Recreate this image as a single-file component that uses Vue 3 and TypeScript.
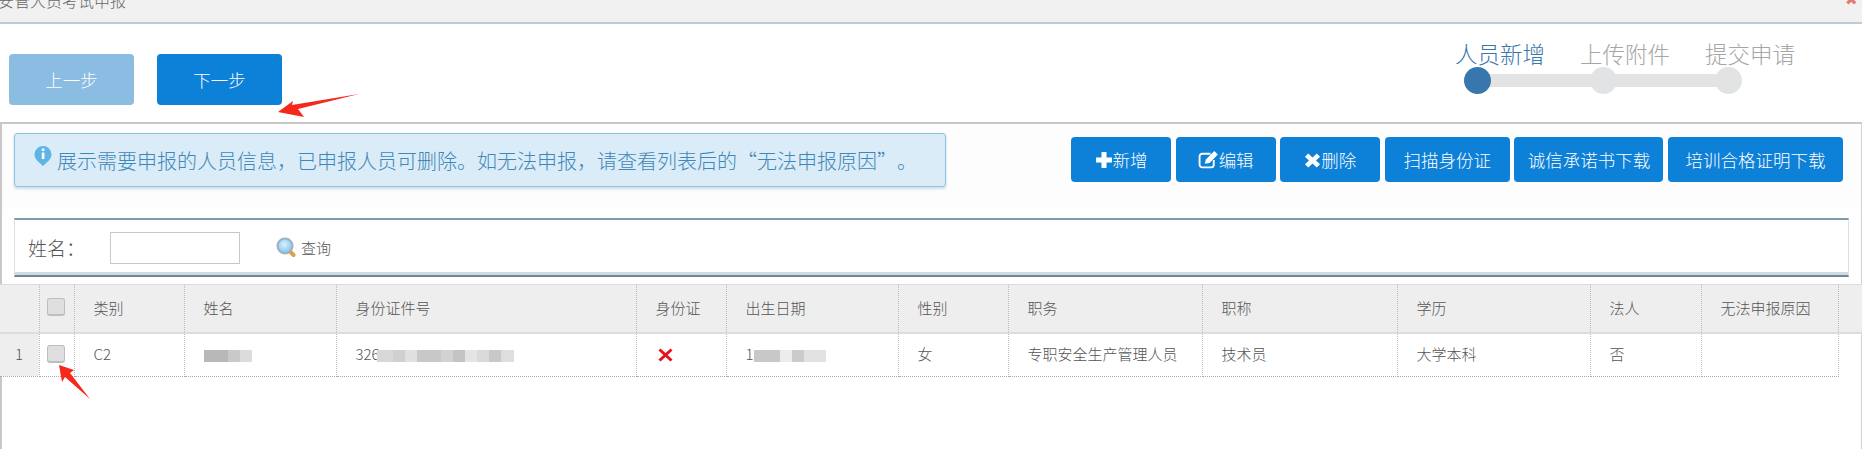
<script setup lang="ts">
const columns = [
  { w: 39, title: '', cell: '1' },
  { w: 35, title: '', cell: '' },
  { w: 110, title: '类别', cell: 'C2' },
  { w: 152, title: '姓名', cell: '' },
  { w: 300, title: '身份证件号', cell: '326' },
  { w: 90, title: '身份证', cell: '' },
  { w: 172, title: '出生日期', cell: '1' },
  { w: 110, title: '性别', cell: '女' },
  { w: 194, title: '职务', cell: '专职安全生产管理人员' },
  { w: 195, title: '职称', cell: '技术员' },
  { w: 193, title: '学历', cell: '大学本科' },
  { w: 111, title: '法人', cell: '否' },
  { w: 137, title: '无法申报原因', cell: '' },
  { w: 24, title: '', cell: '' }
]
const rest = columns.slice(2)
const nameBlur = [
  { w: 24, c: '#b8b8b8' }, { w: 12, c: '#c9c9c9' }, { w: 12, c: '#dcdcdc' }
]
const idBlur = [
  { w: 16, c: '#d8d8d8' }, { w: 12, c: '#d0d0d0' }, { w: 12, c: '#e0e0e0' }, { w: 24, c: '#c8c8c8' },
  { w: 12, c: '#d2d2d2' }, { w: 12, c: '#c4c4c4' }, { w: 12, c: '#e4e4e4' }, { w: 12, c: '#dadada' },
  { w: 12, c: '#c8c8c8' }, { w: 13, c: '#dedede' }
]
const dateBlur = [
  { w: 26, c: '#c8c8c8' }, { w: 12, c: '#ececec' }, { w: 12, c: '#cbcbcb' }, { w: 22, c: '#e2e2e2' }
]
</script>

<template>
  <div class="page">
    <header class="titlebar">
      <span class="title">安管人员考试申报</span>
      <span class="close">✖</span>
    </header>

    <section class="topline">
      <div class="nav-buttons">
        <button class="btn nav prev">上一步</button>
        <button class="btn nav">下一步</button>
      </div>
      <div class="stepper">
        <div class="labels">
          <span class="active">人员新增</span>
          <span>上传附件</span>
          <span>提交申请</span>
        </div>
        <div class="track">
          <i class="dot on"></i>
          <i class="dot"></i>
          <i class="dot"></i>
        </div>
      </div>
    </section>

    <section class="panel">
      <div class="actions">
        <div class="alert">
          <svg class="info" viewBox="0 0 18 22" width="18" height="22">
            <path d="M9 1a8.500 8.500 0 0 1 8.500 8.500c0 4.600-4.600 8-8.500 11.500C5.100 17.500.5 14.100.5 9.500A8.500 8.500 0 0 1 9 1z" fill="#5fb4e6"/>
            <rect x="7.800" y="3.500" width="2.600" height="2.600" fill="#fff"/>
            <rect x="7.800" y="7.500" width="2.600" height="6.500" fill="#fff"/>
          </svg>
          <span>展示需要申报的人员信息，已申报人员可删除。如无法申报，请查看列表后的<span class="quote open">“</span>无法申报原因<span class="quote">”</span>。</span>
        </div>
        <div class="toolbar">
          <button class="btn tool w100">
            <svg viewBox="0 0 18 18" width="18" height="18"><path d="M6.500 1h5v5.500H17v5h-5.500V17h-5v-5.500H1v-5h5.500z" fill="#fff"/></svg>新增
          </button>
          <button class="btn tool w100">
            <svg viewBox="0 0 20 18" width="21" height="19">
              <path d="M15 9.500V14a2.500 2.500 0 0 1-2.500 2.500H4A2.500 2.500 0 0 1 1.500 14V6A2.500 2.500 0 0 1 4 3.500h8" fill="none" stroke="#fff" stroke-width="1.800"/>
              <path d="M6.500 13l1-4L15.500 1l3.500 3.300-8 8z" fill="#fff"/>
            </svg>编辑
          </button>
          <button class="btn tool w100">
            <svg viewBox="0 0 18 18" width="17" height="18"><path d="M4.500 2L9 6.300 13.500 2 17 5.500 12.700 9.500 17 13.500 13.500 17 9 12.700 4.500 17 1 13.500 5.300 9.500 1 5.500z" fill="#fff"/></svg>删除
          </button>
          <button class="btn tool w125">扫描身份证</button>
          <button class="btn tool w149">诚信承诺书下载</button>
          <button class="btn tool w175">培训合格证明下载</button>
        </div>
      </div>

      <form class="search" @submit.prevent>
        <label class="search-label" for="name-input">姓名：</label>
        <input id="name-input" class="search-input" type="text" />
        <span class="query">
          <svg viewBox="0 0 20 21" width="20" height="21">
            <defs>
              <radialGradient id="lens" cx="45%" cy="40%" r="60%">
                <stop offset="0" stop-color="#d8f1fd"/>
                <stop offset="1" stop-color="#7cc4ee"/>
              </radialGradient>
            </defs>
            <circle cx="9" cy="9" r="7.500" fill="url(#lens)" stroke="#9fb1bd" stroke-width="2"/>
            <path d="M15 15.500l2.500 2.500" stroke="#d9a04e" stroke-width="4" stroke-linecap="round"/>
          </svg>
          <span>查询</span>
        </span>
      </form>

      <table class="grid">
        <colgroup>
          <col v-for="(c, i) in columns" :key="i" :style="{ width: c.w + 'px' }" />
        </colgroup>
        <thead>
          <tr>
            <th></th>
            <th class="check-cell"><i class="checkbox"></i></th>
            <th v-for="(c, i) in rest" :key="i" :class="{ blank: i === rest.length - 1 }">{{ c.title }}</th>
          </tr>
        </thead>
        <tbody>
          <tr>
            <td class="rownum">1</td>
            <td class="check-cell"><i class="checkbox"></i></td>
            <td>C2</td>
            <td><span class="blur"><i v-for="(b, i) in nameBlur" :key="i" :style="{ width: b.w + 'px', background: b.c }"></i></span></td>
            <td>326<span class="blur shifted"><i v-for="(b, i) in idBlur" :key="i" :style="{ width: b.w + 'px', background: b.c }"></i></span></td>
            <td>
              <svg class="cross" viewBox="0 0 15 14" width="15" height="14"><path d="M1.500 1.500L13.500 12.500M13.500 1.500L1.500 12.500" stroke="#e8111a" stroke-width="3"/></svg>
            </td>
            <td>1<span class="blur"><i v-for="(b, i) in dateBlur" :key="i" :style="{ width: b.w + 'px', background: b.c }"></i></span></td>
            <td>女</td>
            <td>专职安全生产管理人员</td>
            <td>技术员</td>
            <td>大学本科</td>
            <td>否</td>
            <td></td>
            <td class="blank"></td>
          </tr>
        </tbody>
      </table>
    </section>

    <svg class="arrow one" viewBox="0 0 82 24" width="82" height="24">
      <path d="M0 18L15 7l-1 4L81 0 20 15l6 8z" fill="#f5281c"/>
    </svg>
    <svg class="arrow two" viewBox="0 0 32 34" width="32" height="34">
      <path d="M0 0l15 5-4 3 20 26L6 12l-3 5z" fill="#f5281c"/>
    </svg>
  </div>
</template>

<style>
html, body { margin: 0; background: #fff; overflow: hidden; }
</style>

<style scoped>
.page {
  position: relative;
  width: 1862px;
  height: 449px;
  overflow: hidden;
  background: #fff;
  font-family: "Noto Sans CJK SC", "Liberation Sans", sans-serif;
  font-weight: 300;
  color: #555;
}
.titlebar {
  height: 22px;
  position: relative;
  overflow: hidden;
  background: #f1f1f1;
  border-bottom: 2px solid #bccbd7;
}
.title {
  position: absolute;
  left: -2px;
  top: -11px;
  font-size: 16px;
  line-height: 22px;
  color: #666;
}
.close {
  position: absolute;
  right: 4px;
  top: -9px;
  font-size: 15px;
  line-height: 15px;
  color: #e57a72;
}
.topline {
  height: 98px;
  box-sizing: border-box;
  padding: 17px 67px 0 9px;
  display: flex;
  justify-content: space-between;
  align-items: flex-start;
}
.nav-buttons {
  margin-top: 13px;
  display: flex;
  gap: 23px;
}
.btn {
  border: 0;
  padding: 0;
  border-radius: 4px;
  background: #0d80d8;
  color: #fff;
  font-family: inherit;
  font-weight: 300;
  font-size: 17.500px;
  display: inline-flex;
  align-items: center;
  justify-content: center;
}
.nav { width: 125px; height: 51px; }
.prev { background: #8bbce2; }
.stepper { width: 340px; }
.labels {
  display: flex;
  gap: 35px;
  font-size: 22.500px;
  line-height: 24px;
  color: #a6a6a6;
}
.labels .active { color: #3a76ab; }
.track {
  position: relative;
  width: 278px;
  margin: 2px 0 0 9px;
  display: flex;
  justify-content: space-between;
}
.track::before {
  content: "";
  position: absolute;
  left: 14px;
  right: 14px;
  top: 7px;
  height: 13px;
  background: #e3e3e3;
}
.dot {
  position: relative;
  width: 27px;
  height: 27px;
  border-radius: 50%;
  background: #e1e3e4;
}
.dot.on { background: #3777ae; }
.panel {
  height: 327px;
  box-sizing: border-box;
  border-top: 2px solid #c8c8c8;
  border-left: 2px solid #c8c8c8;
  border-right: 1px solid #d4d4d4;
  background: #fff;
}
.actions {
  display: flex;
  justify-content: space-between;
  align-items: flex-start;
  padding: 9px 18px 0 12px;
  background: #fdfdfd;
  height: 85px;
  box-sizing: border-box;
}
.alert {
  width: 932px;
  height: 54px;
  box-sizing: border-box;
  display: flex;
  align-items: center;
  padding-left: 19px;
  background: #daecf7;
  border: 1px solid #8fc2de;
  border-radius: 3px;
  box-shadow: 0 2px 3px rgba(120, 160, 190, .35);
  font-size: 20px;
  color: #3f87b9;
  white-space: nowrap;
}
.quote {
  display: inline-block;
  width: 1em;
}
.quote.open { text-align: right; }
.info { margin: -8px 5px 0 0; flex: none; }
.toolbar {
  margin-top: 4px;
  display: flex;
  gap: 4.600px;
}
.tool { height: 45px; }
.w100 { width: 100px; }
.w125 { width: 125px; }
.w149 { width: 149px; }
.w175 { width: 175px; }
.search {
  margin: 9px 0 0 12px;
  width: 1835px;
  height: 59px;
  box-sizing: border-box;
  display: flex;
  align-items: center;
  background: #fff;
  border-top: 2px solid #7e9ba8;
  border-bottom: 2px solid #6c8797;
  border-left: 1px solid #d6e0e6;
  border-right: 1px solid #d6e0e6;
  box-shadow: inset 0 -3px 0 #cfdbe1;
}
.search-label {
  width: 83px;
  padding-left: 13px;
  box-sizing: border-box;
  font-size: 19px;
  line-height: 26px;
  color: #555;
}
.search-input {
  width: 130px;
  height: 32px;
  box-sizing: border-box;
  border: 1px solid #c8c8c8;
  background: #fff;
  margin: 0 0 0 12px;
  outline: none;
}
.query {
  margin-left: 36px;
  display: flex;
  align-items: center;
  gap: 5px;
  font-size: 15px;
  color: #555;
}
.grid {
  margin: 7px 0 0 -2px;
  width: 1862px;
  table-layout: fixed;
  border-collapse: collapse;
  font-size: 15px;
}
.grid th {
  height: 48px;
  padding: 0 0 2px 19px;
  box-sizing: border-box;
  background: #eee;
  border-top: 1px solid #ddd;
  border-bottom: 2px solid #ddd;
  border-right: 1px dotted #bbb;
  font-weight: 300;
  text-align: left;
  color: #555;
}
.grid td {
  height: 44px;
  padding: 0 0 2px 19px;
  box-sizing: border-box;
  border-right: 1px dotted #bbb;
  border-bottom: 1px dotted #aaa;
  white-space: nowrap;
  overflow: hidden;
  color: #555;
}
.grid th.blank { border-right: 0; }
.grid td.blank { border: 0; }
.grid .rownum {
  background: #eee;
  padding: 0 0 2px 15px;
}
.grid .check-cell { padding: 0 0 2px 7px; }
.checkbox {
  display: block;
  width: 18px;
  height: 18px;
  box-sizing: border-box;
  border: 1px solid #bdbdbd;
  border-bottom-width: 2px;
  border-radius: 3px;
  background: #dfdfdf;
}
.blur {
  display: inline-flex;
  vertical-align: middle;
  height: 12px;
}
.blur.shifted { margin-left: -3px; }
.blur i { display: block; height: 12px; }
.cross { display: block; margin: 2px 0 0 2px; }
.arrow { position: absolute; }
.arrow.one { left: 278px; top: 94px; }
.arrow.two { left: 59px; top: 365px; }
</style>
